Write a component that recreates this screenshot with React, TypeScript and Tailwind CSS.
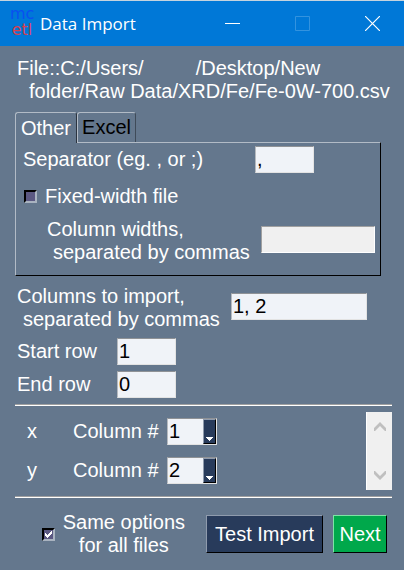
import { useState } from "react";

const sunken =
  "h-[27px] rounded-none border border-t-[#8f9296] border-l-[#b5b9be] border-r-[#e3e3e3] border-b-[#e3e3e3] bg-[#f0f3f8] px-px text-black outline-none";

const raised =
  "h-[38px] shrink-0 border border-r-black border-b-black text-center whitespace-nowrap text-white";

function Logo() {
  return (
    <div className="w-6 pb-1 text-center font-['DejaVu_Sans',sans-serif] text-[16px] leading-[16px]" aria-hidden="true">
      <div className="text-[#0a50f0]">mc</div>
      <div className="text-[#d6404f]">etl</div>
    </div>
  );
}

function TitleBar() {
  return (
    <header className="flex h-[46px] items-center border-t border-[#c5d3de] bg-[#0078d7] pl-[10px] text-white">
      <Logo />
      <h1 className="ml-[6px] flex-1 font-['Open_Sans',sans-serif] text-[17px] whitespace-nowrap">Data Import</h1>
      <button type="button" aria-label="Minimize" className="flex h-full w-[70px] items-center justify-center">
        <svg width="15" height="15" viewBox="0 0 15 15" stroke="currentColor">
          <path d="M0 7.5H15" />
        </svg>
      </button>
      <button type="button" aria-label="Maximize" disabled className="flex h-full w-[70px] items-center justify-center text-[#3393df]">
        <svg width="15" height="15" viewBox="0 0 15 15" fill="none" stroke="currentColor">
          <path d="M.5 .5H14.5V14.5H.5Z" />
        </svg>
      </button>
      <button type="button" aria-label="Close" className="flex h-full w-[67px] items-center justify-center pl-1">
        <svg width="15" height="15" viewBox="0 0 15 15" stroke="currentColor" strokeWidth="1.2">
          <path d="M0 0L15 15M15 0L0 15" />
        </svg>
      </button>
    </header>
  );
}

function Tick({ id, checked, onChange }: { id: string; checked: boolean; onChange: (v: boolean) => void }) {
  return (
    <span className="relative flex size-[13px] shrink-0">
      <input
        id={id}
        type="checkbox"
        checked={checked}
        onChange={(e) => onChange(e.target.checked)}
        className="size-[13px] appearance-none border-2 border-t-black border-l-black border-r-[#a9b3c0] border-b-[#a9b3c0] bg-[#5b5882]"
      />
      {checked && (
        <svg
          className="pointer-events-none absolute top-[3px] left-[3px]"
          width="8"
          height="8"
          viewBox="0 0 8 8"
          fill="#fff"
          shapeRendering="crispEdges"
        >
          <path d="M0 2H1V3H2V4H3V3H4V2H5V1H6V0H7V3H6V4H5V5H4V6H3V7H2V6H1V5H0Z" />
        </svg>
      )}
    </span>
  );
}

function ColumnRow({ name, value }: { name: string; value: string }) {
  const id = `column-${name}`;
  return (
    <div className="flex items-center">
      <span className="w-[46px]">{name}</span>
      <label htmlFor={id} className="w-[94px] whitespace-nowrap">
        Column #
      </label>
      <span className="relative flex">
        <select id={id} defaultValue={value} className={`${sunken} w-[50px] appearance-none`}>
          <option>0</option>
          <option>1</option>
          <option>2</option>
          <option>3</option>
        </select>
        <span className="pointer-events-none absolute top-px right-px flex h-[25px] w-[13px] items-end justify-center border border-t-[#8f9bad] border-l-[#8f9bad] border-r-black border-b-black bg-[#283b5b] pb-[2px]">
          <svg width="7" height="4" viewBox="0 0 7 4" fill="#fff" shapeRendering="crispEdges">
            <path d="M0 0H7V1H6V2H5V3H4V4H3V3H2V2H1V1H0Z" />
          </svg>
        </span>
      </span>
    </div>
  );
}

function ScrollArrow({ label, d }: { label: string; d: string }) {
  return (
    <button type="button" aria-label={label} className="flex h-[29px] items-center justify-center text-[#bfbfbf]">
      <svg width="12" height="9" viewBox="0 0 12 9" fill="currentColor">
        <path d={d} />
      </svg>
    </button>
  );
}

function Rule() {
  return <hr className="h-[2px] border-t border-b border-t-[#a0a0a0] border-b-white" />;
}

export default function App() {
  const [fixed, setFixed] = useState(false);
  const [same, setSame] = useState(true);

  return (
    <div className="min-h-screen bg-[#64778d] font-['Liberation_Sans',Arial,sans-serif] text-[20px] leading-[23px] text-white">
      <TitleBar />
      <main className="pt-[11px] pr-3 pb-3 pl-[15px]">
        <p className="pl-[2px] whitespace-nowrap">
          File::C:/Users/
          <span className="inline-block w-[52px]" />
          /Desktop/New
          <br />
          <span className="pl-3">folder/Raw Data/XRD/Fe/Fe-0W-700.csv</span>
        </p>

        <section className="mt-[9px] mr-[11px]">
          <div role="tablist" className="flex items-end">
            <button
              type="button"
              role="tab"
              aria-selected="true"
              className="z-10 -mb-px h-[31px] w-[62px] rounded-t-[3px] border border-b-0 border-t-[#b2bbc6] border-l-[#b2bbc6] border-r-[#2b3440] bg-[#64778d]"
            >
              Other
            </button>
            <button
              type="button"
              role="tab"
              aria-selected="false"
              className="h-[30px] w-[59px] rounded-t-[3px] border border-b-0 border-t-[#b2bbc6] border-l-[#b2bbc6] border-r-[#3f4b59] text-black"
            >
              Excel
            </button>
          </div>
          <div className="border border-t-[#b2bbc6] border-l-[#b2bbc6] border-r-black border-b-black pt-[3px] pr-[5px] pb-[11px] pl-[7px]">
            <div className="flex items-center">
              <label htmlFor="separator" className="w-[232px] whitespace-nowrap">
                Separator (eg. , or ;)
              </label>
              <input id="separator" defaultValue="," className={`${sunken} w-[59px]`} />
            </div>
            <div className="mt-3 flex items-center gap-2 pl-px">
              <Tick id="fixed-width" checked={fixed} onChange={setFixed} />
              <label htmlFor="fixed-width">Fixed-width file</label>
            </div>
            <div className="mt-[10px] flex items-center justify-between pl-6">
              <label htmlFor="widths" className="whitespace-nowrap">
                Column widths,
                <br />
                <span className="pl-[6px]">separated by commas</span>
              </label>
              <input
                id="widths"
                disabled={!fixed}
                className="mb-1 h-[27px] w-[114px] border border-t-[#a0a0a0] border-l-[#a0a0a0] border-r-white border-b-white bg-[#f0f0f0] px-px text-black"
              />
            </div>
          </div>
        </section>

        <section className="mt-[9px] pl-[2px]">
          <div className="flex items-center">
            <label htmlFor="columns" className="w-[214px] whitespace-nowrap">
              Columns to import,
              <br />
              <span className="pl-[6px]">separated by commas</span>
            </label>
            <input id="columns" defaultValue="1, 2" className={`${sunken} mb-1 w-[136px]`} />
          </div>
          <div className="mt-[7px] flex items-center">
            <label htmlFor="start" className="w-[100px]">Start row</label>
            <input id="start" defaultValue="1" className={`${sunken} w-[59px]`} />
          </div>
          <div className="mt-[6px] mb-[6px] flex items-center">
            <label htmlFor="end" className="w-[100px]">End row</label>
            <input id="end" defaultValue="0" className={`${sunken} w-[59px]`} />
          </div>
        </section>

        <Rule />
        <section className="flex justify-between py-[6px] pl-3">
          <div className="flex flex-col gap-3 pt-[6px]">
            <ColumnRow name="x" value="1" />
            <ColumnRow name="y" value="2" />
          </div>
          <div className="flex h-[78px] w-[26px] flex-col justify-between border-l border-white bg-[#f0f0f0]">
            <ScrollArrow label="Scroll up" d="M6 0L12 6V9H11L6 4L1 9H0V6Z" />
            <ScrollArrow label="Scroll down" d="M6 9L12 3V0H11L6 5L1 0H0V3Z" />
          </div>
        </section>
        <Rule />

        <footer className="mt-[13px] flex items-center justify-end pr-[5px]">
          <Tick id="same-options" checked={same} onChange={setSame} />
          <label htmlFor="same-options" className="ml-2 text-center whitespace-nowrap">
            Same options
            <br />
            for all files
          </label>
          <button type="button" className={`${raised} ml-[21px] w-[117px] border-t-[#8f9bad] border-l-[#8f9bad] bg-[#283b5b]`}>
            Test Import
          </button>
          <button type="button" className={`${raised} ml-[10px] w-[54px] border-t-[#7de3a5] border-l-[#7de3a5] bg-[#00a84b]`}>
            Next
          </button>
        </footer>
      </main>
    </div>
  );
}
